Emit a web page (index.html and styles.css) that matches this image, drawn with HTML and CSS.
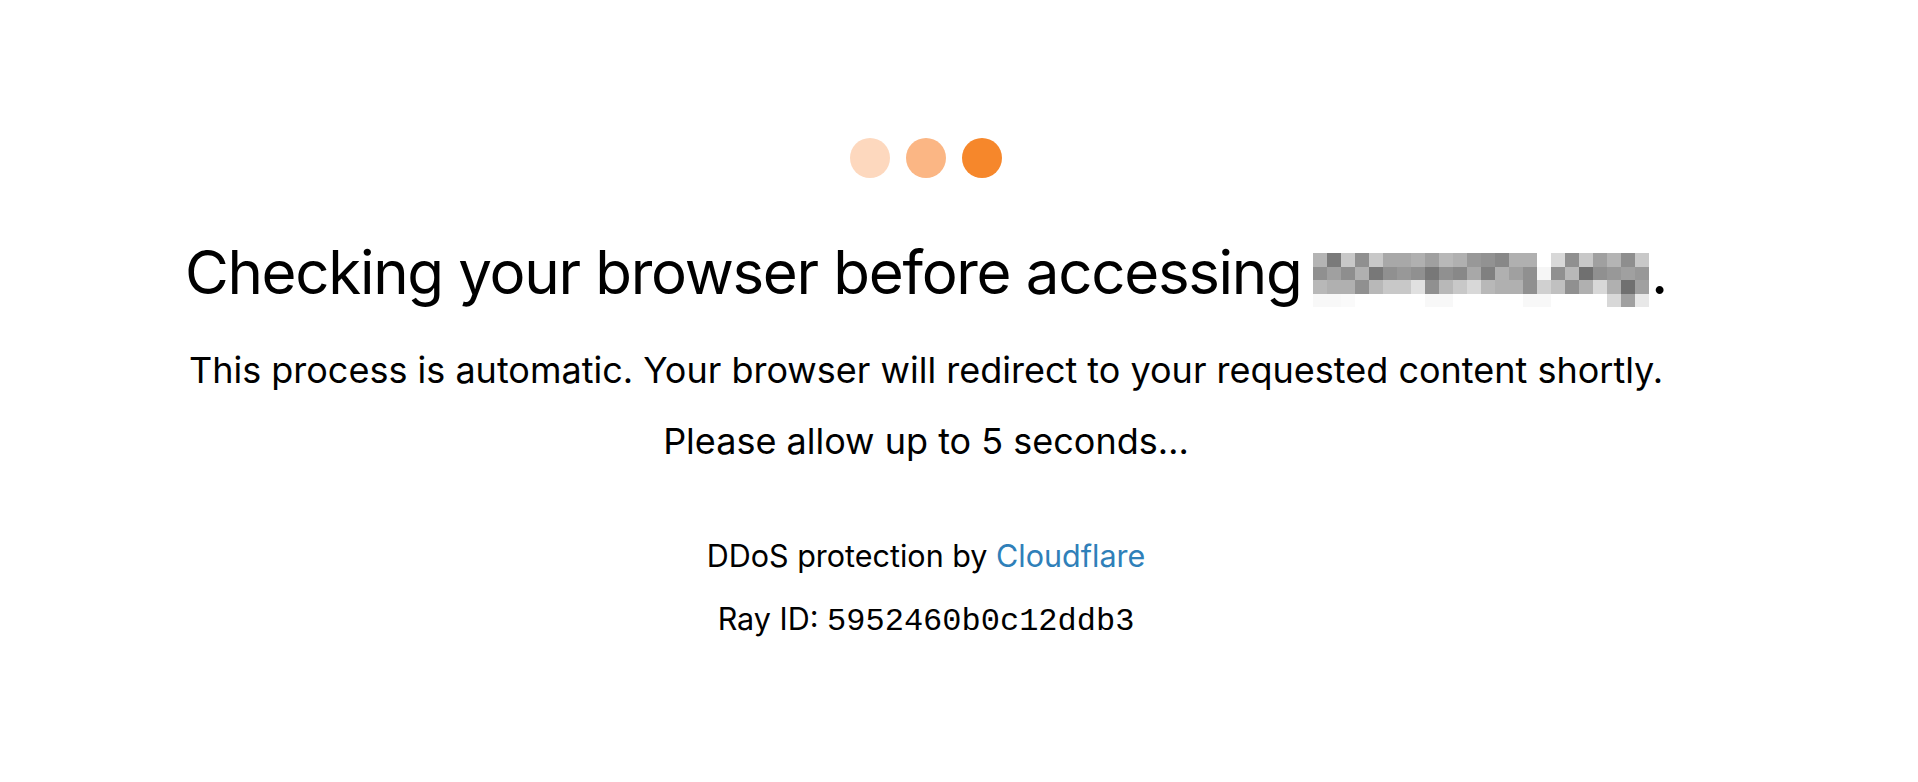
FILE: index.html
```
<!DOCTYPE html>
<html lang="en">
<head>
<meta charset="utf-8">
<title>Just a moment...</title>
<link rel="stylesheet" href="styles.css">
</head>
<body>
<main class="page">
  <div class="bubbles">
    <span class="bubble b1"></span>
    <span class="bubble b2"></span>
    <span class="bubble b3"></span>
  </div>
  <h1 class="title">Checking your browser before accessing <svg class="blur" width="336" height="54" viewBox="0 0 24 4" preserveAspectRatio="none" shape-rendering="crispEdges">
    <g>
      <rect x="0" y="0" width="1" height="1" fill="#b4b4b4"/><rect x="1" y="0" width="1" height="1" fill="#7a7a7a"/><rect x="2" y="0" width="1" height="1" fill="#c8c8c8"/><rect x="3" y="0" width="1" height="1" fill="#909090"/><rect x="4" y="0" width="1" height="1" fill="#c8c8c8"/><rect x="5" y="0" width="1" height="1" fill="#a8a8a8"/><rect x="6" y="0" width="1" height="1" fill="#a8a8a8"/><rect x="7" y="0" width="1" height="1" fill="#b0b0b0"/><rect x="8" y="0" width="1" height="1" fill="#a0a0a0"/><rect x="9" y="0" width="1" height="1" fill="#b8b8b8"/><rect x="10" y="0" width="1" height="1" fill="#b0b0b0"/><rect x="11" y="0" width="1" height="1" fill="#989898"/><rect x="12" y="0" width="1" height="1" fill="#929292"/><rect x="13" y="0" width="1" height="1" fill="#888888"/><rect x="14" y="0" width="1" height="1" fill="#b0b0b0"/><rect x="15" y="0" width="1" height="1" fill="#b0b0b0"/><rect x="16" y="0" width="1" height="1" fill="#ffffff"/><rect x="17" y="0" width="1" height="1" fill="#d8d8d8"/><rect x="18" y="0" width="1" height="1" fill="#909090"/><rect x="19" y="0" width="1" height="1" fill="#c8c8c8"/><rect x="20" y="0" width="1" height="1" fill="#a0a0a0"/><rect x="21" y="0" width="1" height="1" fill="#b4b4b4"/><rect x="22" y="0" width="1" height="1" fill="#8e8e8e"/><rect x="23" y="0" width="1" height="1" fill="#c8c8c8"/>
      <rect x="0" y="1" width="1" height="1" fill="#909090"/><rect x="1" y="1" width="1" height="1" fill="#a0a0a0"/><rect x="2" y="1" width="1" height="1" fill="#8e8e8e"/><rect x="3" y="1" width="1" height="1" fill="#b0b0b0"/><rect x="4" y="1" width="1" height="1" fill="#787878"/><rect x="5" y="1" width="1" height="1" fill="#909090"/><rect x="6" y="1" width="1" height="1" fill="#989898"/><rect x="7" y="1" width="1" height="1" fill="#909090"/><rect x="8" y="1" width="1" height="1" fill="#787878"/><rect x="9" y="1" width="1" height="1" fill="#909090"/><rect x="10" y="1" width="1" height="1" fill="#888888"/><rect x="11" y="1" width="1" height="1" fill="#a8a8a8"/><rect x="12" y="1" width="1" height="1" fill="#808080"/><rect x="13" y="1" width="1" height="1" fill="#b0b0b0"/><rect x="14" y="1" width="1" height="1" fill="#a0a0a0"/><rect x="15" y="1" width="1" height="1" fill="#909090"/><rect x="16" y="1" width="1" height="1" fill="#f6f6f6"/><rect x="17" y="1" width="1" height="1" fill="#909090"/><rect x="18" y="1" width="1" height="1" fill="#b8b8b8"/><rect x="19" y="1" width="1" height="1" fill="#707070"/><rect x="20" y="1" width="1" height="1" fill="#909090"/><rect x="21" y="1" width="1" height="1" fill="#989898"/><rect x="22" y="1" width="1" height="1" fill="#a0a0a0"/><rect x="23" y="1" width="1" height="1" fill="#989898"/>
      <rect x="0" y="2" width="1" height="1" fill="#b8b8b8"/><rect x="1" y="2" width="1" height="1" fill="#b0b0b0"/><rect x="2" y="2" width="1" height="1" fill="#b0b0b0"/><rect x="3" y="2" width="1" height="1" fill="#909090"/><rect x="4" y="2" width="1" height="1" fill="#b8b8b8"/><rect x="5" y="2" width="1" height="1" fill="#c8c8c8"/><rect x="6" y="2" width="1" height="1" fill="#c8c8c8"/><rect x="7" y="2" width="1" height="1" fill="#e0e0e0"/><rect x="8" y="2" width="1" height="1" fill="#909090"/><rect x="9" y="2" width="1" height="1" fill="#b8b8b8"/><rect x="10" y="2" width="1" height="1" fill="#c8c8c8"/><rect x="11" y="2" width="1" height="1" fill="#d8d8d8"/><rect x="12" y="2" width="1" height="1" fill="#b8b8b8"/><rect x="13" y="2" width="1" height="1" fill="#b0b0b0"/><rect x="14" y="2" width="1" height="1" fill="#b0b0b0"/><rect x="15" y="2" width="1" height="1" fill="#909090"/><rect x="16" y="2" width="1" height="1" fill="#d0d0d0"/><rect x="17" y="2" width="1" height="1" fill="#c0c0c0"/><rect x="18" y="2" width="1" height="1" fill="#909090"/><rect x="19" y="2" width="1" height="1" fill="#b0b0b0"/><rect x="20" y="2" width="1" height="1" fill="#d8d8d8"/><rect x="21" y="2" width="1" height="1" fill="#b0b0b0"/><rect x="22" y="2" width="1" height="1" fill="#707070"/><rect x="23" y="2" width="1" height="1" fill="#a0a0a0"/>
      <rect x="0" y="3" width="1" height="1" fill="#f8f8f8"/><rect x="1" y="3" width="1" height="1" fill="#f8f8f8"/><rect x="2" y="3" width="1" height="1" fill="#fafafa"/><rect x="8" y="3" width="1" height="1" fill="#f8f8f8"/><rect x="9" y="3" width="1" height="1" fill="#f8f8f8"/><rect x="15" y="3" width="1" height="1" fill="#f8f8f8"/><rect x="16" y="3" width="1" height="1" fill="#f8f8f8"/><rect x="21" y="3" width="1" height="1" fill="#d8d8d8"/><rect x="22" y="3" width="1" height="1" fill="#a0a0a0"/><rect x="23" y="3" width="1" height="1" fill="#e8e8e8"/>
    </g>
  </svg><span class="dot">.</span></h1>
  <p class="lead">This process is automatic. Your browser will redirect to your requested content shortly.</p>
  <p class="lead second">Please allow up to 5 seconds…</p>
  <p class="attribution">DDoS protection by <a class="cf-link" href="#">Cloudflare</a></p>
  <p class="ray">Ray ID: <code class="ray-id">5952460b0c12ddb3</code></p>
</main>
</body>
</html>
```

FILE: styles.css
```
html, body {
  margin: 0;
  padding: 0;
  background: #ffffff;
}

body {
  font-family: Inter, "Noto Sans", "Liberation Sans", sans-serif;
  color: #000000;
}

.page {
  display: flex;
  flex-direction: column;
  align-items: center;
  padding: 138px 66px 0 0;
}

.bubbles {
  display: flex;
  gap: 16px;
}

.bubble {
  width: 40px;
  height: 40px;
  border-radius: 50%;
  background: #f6862a;
}

.b1 { background: #fdd8be; }
.b2 { background: #fbb684; }
.b3 { background: #f6872b; }

.title {
  margin: 58px 0 0;
  font-size: 60px;
  font-weight: 400;
  line-height: 1.2;
  white-space: nowrap;
  letter-spacing: -1.3px;
}

.blur {
  display: inline-block;
  vertical-align: -13px;
  width: 336px;
  height: 54px;
  margin-left: -4px;
}

.dot {
  margin-left: 2px;
}

.lead {
  margin: 41px 0 0;
  font-size: 36px;
  line-height: 1.2;
  white-space: nowrap;
}

.lead.second {
  margin-top: 28px;
}

.attribution {
  margin: 75px 0 0;
  font-size: 30.5px;
  line-height: 1.2;
}

.cf-link {
  color: #2f80b9;
  text-decoration: none;
}

.ray {
  margin: 26px 0 0;
  font-size: 30.5px;
  line-height: 1.2;
}

.ray-id {
  font-family: "Liberation Mono", monospace;
  font-size: 32px;
}
```
